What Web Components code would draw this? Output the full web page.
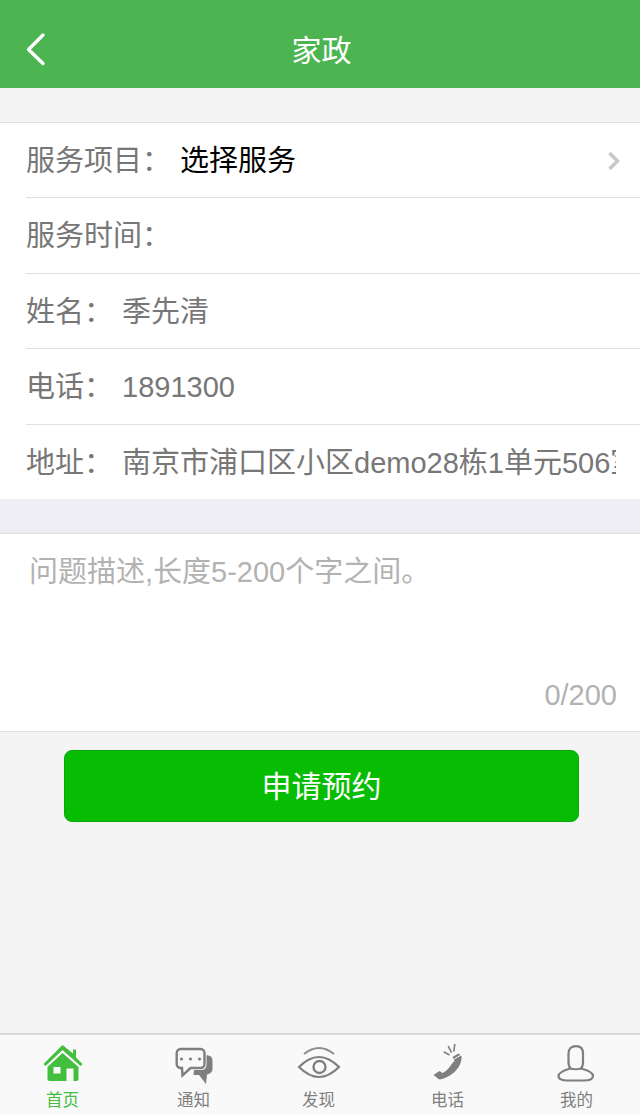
<!DOCTYPE html>
<html lang="zh">
<head>
<meta charset="utf-8">
<title>家政</title>
<style>
  html, body { margin: 0; padding: 0; }
  body {
    width: 640px;
    height: 1115px;
    overflow: hidden;
    background: #f4f4f4;
    font-family: "Liberation Sans", "Noto Sans CJK SC", sans-serif;
    display: flex;
    flex-direction: column;
  }
</style>
</head>
<body>
<app-header title="家政"></app-header>

<form-list>
  <form-row label="服务项目：" arrow><span style="color:#000">选择服务</span></form-row>
  <form-row label="服务时间："></form-row>
  <form-row label="姓名：">季先清</form-row>
  <form-row label="电话：">1891300</form-row>
  <form-row label="地址：" last>南京市浦口区小区demo28栋1单元506室</form-row>
</form-list>

<desc-box placeholder="问题描述,长度5-200个字之间。" count="0/200"></desc-box>

<submit-button>申请预约</submit-button>

<tab-bar>
  <tab-item label="首页" shift="-1.5" active>
    <svg width="40" height="38" viewBox="0 0 40 38">
      <path d="M19.500 0 30 8.500V4.500h3v8l6.500 6.500-2 2-18-16-17 16-2-2z" fill="#43bf3f"/>
      <path d="M19.500 8 35.500 22v12a2 2 0 0 1-2 2h-3V23.500h-7V36h-17a2 2 0 0 1-2-2V22zM10.500 22v6.500h7V22z" fill="#43bf3f" fill-rule="evenodd"/>
    </svg>
  </tab-item>
  <tab-item label="通知" shift="1.5">
    <svg width="40" height="38" viewBox="0 0 40 38">
      <path d="M32.500 10c5.500 1 6 3 6 6v8c0 3-2.500 5-5.500 5.500L32 39l-7-9h-5.500l.5-5h7a5 5 0 0 0 5.500-5z" fill="#7f7f7f"/>
      <path d="M7 4h19.500a4 4 0 0 1 4 4v11a4 4 0 0 1-4 4h-10l-8 7.500L8 23H6.700a4 4 0 0 1-4-4V8a4 4 0 0 1 4-4z" fill="#f9f9f9" stroke="#7f7f7f" stroke-width="2.400"/>
      <circle cx="7.500" cy="14" r="1.600" fill="#7f7f7f"/><circle cx="16.500" cy="14" r="1.600" fill="#7f7f7f"/><circle cx="25.500" cy="14" r="1.600" fill="#7f7f7f"/>
    </svg>
  </tab-item>
  <tab-item label="发现" shift="-1.5">
    <svg width="44" height="38" viewBox="0 0 44 38">
      <path d="M2 22C10 14 16 12 22 12s12 2 20 10C34 30 28 32 22 32S10 30 2 22z" fill="none" stroke="#7f7f7f" stroke-width="2.200"/>
      <path d="M7 9Q22-3 37 9" fill="none" stroke="#8c8c8c" stroke-width="2"/>
      <circle cx="22.500" cy="22" r="6" fill="none" stroke="#7f7f7f" stroke-width="2.400"/>
    </svg>
  </tab-item>
  <tab-item label="电话" shift="-0.5">
    <svg width="40" height="38" viewBox="0 0 40 38">
      <path d="M24.500 12 30.500 8.500 33.500 11C34 17 31 23 26 27.500 21.500 31 17 33.500 12 34.500L10.500 34 5.500 30 11.500 26 14.500 28C17 27 21 23.500 23 20 24.500 18 26 16.500 26.500 16z" fill="#7f7f7f"/>
      <path d="M24.500 15 33 10" fill="none" stroke="#f9f9f9" stroke-width="1"/>
      <path d="M15.800 6.700 21.500 10M20.200 1 23.500 7.700M26.800-1 25.800 6.700" fill="none" stroke="#7f7f7f" stroke-width="1.600"/>
    </svg>
  </tab-item>
  <tab-item label="我的" shift="0.5">
    <svg width="38" height="38" viewBox="0 0 38 38">
      <path d="M18 1.200C22.500 1.200 25 4 25 8.500V17C25 20 24 22.500 23 23.500 29 25 35 27 35 31 35 34.500 30 35.500 26 35.500H9C5 35.500.5 34.500.5 31 .5 27 7 25 12.500 23.500 11.500 22.500 10.500 20 10.500 17V8.500C10.500 4 13.500 1.200 18 1.200z" fill="none" stroke="#7f7f7f" stroke-width="2.200"/>
      <path d="M12.500 23.500C15 24.500 20.500 24.500 23 23.500" fill="none" stroke="#7f7f7f" stroke-width="2"/>
    </svg>
  </tab-item>
</tab-bar>

<script>
class AppHeader extends HTMLElement {
  connectedCallback() {
    this.attachShadow({ mode: "open" });
    this.shadowRoot.innerHTML = `
      <style>
        :host {
          display: flex;
          align-items: center;
          justify-content: center;
          position: relative;
          height: 88px;
          flex: none;
          background: #4cb551;
          color: #fff;
          font-size: 30px;
        }
        svg { position: absolute; left: 24px; top: 32px; }
        span { margin-left: 3px; margin-top: 8px; }
      </style>
      <svg width="24" height="34" viewBox="0 0 24 34">
        <path d="M19 3 4.500 17.500 19 31.500" fill="none" stroke="#fff" stroke-width="3.400" stroke-linecap="round" stroke-linejoin="round"/>
      </svg>
      <span>${this.getAttribute("title")}</span>
    `;
  }
}

class FormList extends HTMLElement {
  connectedCallback() {
    this.attachShadow({ mode: "open" });
    this.shadowRoot.innerHTML = `
      <style>
        :host {
          display: block;
          flex: none;
          margin-top: 34px;
          border-top: 1px solid #dedede;
          background: #fff;
        }
      </style>
      <slot></slot>
    `;
  }
}

class FormRow extends HTMLElement {
  connectedCallback() {
    this.attachShadow({ mode: "open" });
    const arrow = this.hasAttribute("arrow") ? `
      <svg class="arrow" width="16" height="22" viewBox="0 0 16 22">
        <path d="M3.500 3 11.500 11 3.500 19" fill="none" stroke="#c7c7cc" stroke-width="3.400"/>
      </svg>` : "";
    this.shadowRoot.innerHTML = `
      <style>
        :host {
          display: block;
          margin-left: 26px;
          font-size: 29px;
          line-height: 40px;
          color: #777;
          --row-h: 75px;
          --row-line: 1px solid #e0e0e0;
        }
        :host(:nth-child(even)) { --row-h: 76px; }
        :host([last]) { --row-h: 74px; --row-line: 0; }
        .row {
          display: flex;
          align-items: center;
          gap: 9px;
          box-sizing: border-box;
          height: var(--row-h);
          padding: 1px 24px 0 0;
          border-bottom: var(--row-line);
          position: relative;
        }
        .label { flex: none; }
        .value { flex: 1; min-width: 0; overflow: hidden; white-space: nowrap; }
        .arrow { position: absolute; right: 18px; top: 27px; }
      </style>
      <div class="row">
        <span class="label">${this.getAttribute("label")}</span>
        <span class="value"><slot></slot></span>
        ${arrow}
      </div>
    `;
  }
}

class DescBox extends HTMLElement {
  connectedCallback() {
    this.attachShadow({ mode: "open" });
    this.shadowRoot.innerHTML = `
      <style>
        :host {
          display: flex;
          flex: none;
          flex-direction: column;
          justify-content: space-between;
          box-sizing: border-box;
          height: 199px;
          margin-top: 34px;
          padding: 19px 23px 21px 29px;
          background: #fff;
          border-top: 1px solid #dedede;
          border-bottom: 1px solid #dedede;
          box-shadow: 0 -34px 0 0 #eeeef4;
          font-size: 29px;
          color: #b2b2b2;
        }
        .count { text-align: right; line-height: 30px; }
        .ph { line-height: 38px; }
      </style>
      <div class="ph">${this.getAttribute("placeholder")}</div>
      <div class="count">${this.getAttribute("count")}</div>
    `;
  }
}

class SubmitButton extends HTMLElement {
  connectedCallback() {
    this.attachShadow({ mode: "open" });
    this.shadowRoot.innerHTML = `
      <style>
        :host {
          display: flex;
          flex: none;
          align-items: center;
          justify-content: center;
          box-sizing: border-box;
          width: 515px;
          height: 72px;
          margin: 18px 0 0 64px;
          padding-bottom: 4px;
          background: #06bd04;
          border: 1px solid #0aa80a;
          border-radius: 8px;
          color: #fff;
          font-size: 30px;
        }
      </style>
      <slot></slot>
    `;
  }
}

class TabBar extends HTMLElement {
  connectedCallback() {
    this.attachShadow({ mode: "open" });
    this.shadowRoot.innerHTML = `
      <style>
        :host {
          display: flex;
          flex: none;
          box-sizing: border-box;
          height: 82px;
          margin-top: auto;
          background: #f9f9f9;
          border-top: 2px solid #d8d8d8;
        }
      </style>
      <slot></slot>
    `;
  }
}

class TabItem extends HTMLElement {
  connectedCallback() {
    this.attachShadow({ mode: "open" });
    const active = this.hasAttribute("active");
    const shift = Number(this.getAttribute("shift") || 0);
    this.shadowRoot.innerHTML = `
      <style>
        :host {
          display: flex;
          flex: 1;
          flex-direction: column;
          align-items: center;
          padding-top: 10px;
          margin-left: ${shift}px;
          margin-right: ${-shift}px;
          font-size: 16.500px;
          line-height: 20px;
          color: ${active ? "#43bf3f" : "#7f7f7f"};
        }
        ::slotted(svg) { display: block; height: 38px; overflow: visible; }
        span { margin-top: 7px; }
      </style>
      <slot></slot>
      <span>${this.getAttribute("label")}</span>
    `;
  }
}

customElements.define("app-header", AppHeader);
customElements.define("form-list", FormList);
customElements.define("form-row", FormRow);
customElements.define("desc-box", DescBox);
customElements.define("submit-button", SubmitButton);
customElements.define("tab-bar", TabBar);
customElements.define("tab-item", TabItem);
</script>
</body>
</html>
